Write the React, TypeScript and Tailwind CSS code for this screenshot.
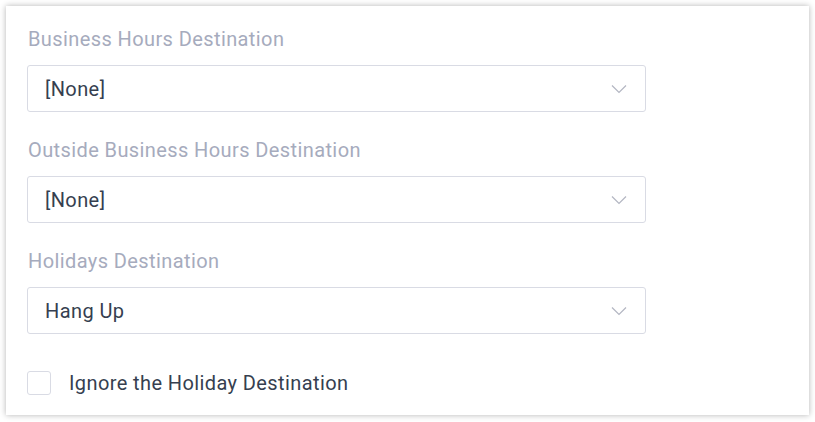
import React from "react";

function Chevron() {
  return (
    <svg width="16" height="10" viewBox="0 0 16 10" fill="none" className="shrink-0">
      <path d="M1 1.5 L8 8.5 L15 1.5" stroke="#b3b6c2" strokeWidth="1.2" />
    </svg>
  );
}

function Field({ label, value }: { label: string; value: string }) {
  return (
    <div className="flex flex-col">
      <div className="text-[20px] leading-[24px] tracking-[0.4px] text-[#a6abbd] pl-px mb-[14px]">{label}</div>
      <div className="w-[619px] h-[47px] border border-[#d9dbe4] rounded-[3px] flex items-center justify-between pl-[17px] pr-[18px]">
        <span className="text-[20px] tracking-[0.4px] text-[#363f50]">{value}</span>
        <Chevron />
      </div>
    </div>
  );
}

export default function App() {
  return (
    <div className="w-[815px] h-[422px] bg-white p-[6px]" style={{ fontFamily: "Roboto, 'Noto Sans', sans-serif" }}>
      <div className="w-[803px] h-[409px] bg-white shadow-[0_0_6px_rgba(0,0,0,0.3)] pt-[21px] pl-[21px] flex flex-col gap-[26px]">
        <Field label="Business Hours Destination" value="[None]" />
        <Field label="Outside Business Hours Destination" value="[None]" />
        <Field label="Holidays Destination" value="Hang Up" />
        <div className="flex items-center mt-[11px]">
          <div className="w-[24px] h-[24px] border border-[#d9dbe4] rounded-[3px] bg-white" />
          <span className="ml-[18px] text-[20px] leading-[24px] tracking-[0.4px] text-[#363f50]">Ignore the Holiday Destination</span>
        </div>
      </div>
    </div>
  );
}
